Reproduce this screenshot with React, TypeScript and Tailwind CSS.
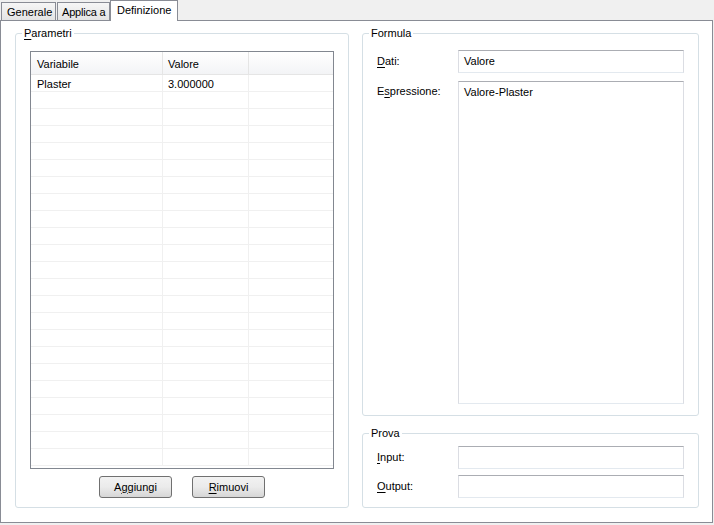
import React from 'react';

const rows = Array.from({ length: 23 }, (_, i) => (i === 0 ? { name: 'Plaster', value: '3.000000' } : null));

const Mnemonic: React.FC<{ before?: string; key_: string; after: string }> = ({ before = '', key_, after }) => (
  <span>
    {before}
    <u className="underline underline-offset-[2px]">{key_}</u>
    {after}
  </span>
);

const TextBox: React.FC<{ value?: string; className?: string }> = ({ value, className = 'h-[23px]' }) => (
  <div
    className={`w-[226px] ${className} border border-t-[#abadb3] border-x-[#dbdde3] border-b-[#e3e9ef] bg-white px-[5px] pt-[4px] leading-[13px]`}
  >
    {value}
  </div>
);

const Button: React.FC<{ children: React.ReactNode }> = ({ children }) => (
  <button className="w-[73px] h-[22px] rounded-[3px] border border-[#707070] bg-gradient-to-b from-[#f2f2f2] via-[#ebebeb] to-[#d6d6d6] text-[11px] leading-[13px] text-black">
    {children}
  </button>
);

export default function App() {
  return (
    <div className="w-[714px] h-[525px] bg-[#f0f0f0] text-[11px] leading-[13px] text-black font-['Liberation_Sans',Arial,sans-serif] overflow-hidden">
      {/* Tabs */}
      <div className="flex items-end h-[20px] pl-[1px]">
        <div className="w-[55px] h-[18px] border border-b-0 border-[#898c95] bg-gradient-to-b from-[#f6f6f6] to-[#e4e4e4] pl-[5px] pt-[3px] whitespace-nowrap">
          Generale
        </div>
        <div className="ml-[1px] w-[53px] h-[18px] border border-b-0 border-[#898c95] bg-gradient-to-b from-[#f6f6f6] to-[#e4e4e4] pl-[4px] pt-[3px] whitespace-nowrap tracking-[-0.2px]">
          Applica a
        </div>
        <div className="relative z-10 -mb-[1px] w-[68px] h-[21px] border border-b-0 border-[#898c95] bg-white pl-[6px] pt-[3px] whitespace-nowrap">
          Definizione
        </div>
      </div>

      {/* Panel */}
      <div className="w-[713px] h-[503px] border border-[#898c95] bg-white flex gap-[13px] pt-[6px] pl-[14px]">
        {/* Parametri */}
        <fieldset className="w-[334px] h-[481px] border border-[#d5dfe5] rounded-[3px] p-0 m-0">
          <legend className="ml-[6px] px-[2px] leading-[13px]">
            <Mnemonic key_="P" after="arametri" />
          </legend>
          <div className="px-[14px] pt-[11px] flex flex-col">
            <div className="h-[418px] border border-[#828790] overflow-hidden">
              <div className="flex h-[23px] border-b border-[#e5e5e5] bg-gradient-to-b from-white to-[#f3f4f6]">
                <div className="w-[132px] border-r border-[#e5e5e5] pl-[6px] pt-[6px]">Variabile</div>
                <div className="w-[86px] border-r border-[#e5e5e5] pl-[5px] pt-[6px]">Valore</div>
                <div className="flex-1" />
              </div>
              {rows.map((r, i) => (
                <div key={i} className="flex h-[17px] border-b border-[#f0f0f0]">
                  <div className="w-[132px] border-r border-[#f0f0f0] pl-[6px] pt-[3px]">{r?.name}</div>
                  <div className="w-[86px] border-r border-[#f0f0f0] pl-[5px] pt-[3px]">{r?.value}</div>
                  <div className="flex-1" />
                </div>
              ))}
            </div>
            <div className="flex justify-center gap-[20px] mt-[7px]">
              <Button>
                <Mnemonic before="A" key_="g" after="giungi" />
              </Button>
              <Button>
                <Mnemonic key_="R" after="imuovi" />
              </Button>
            </div>
          </div>
        </fieldset>

        {/* Right column */}
        <div className="flex flex-col">
          <fieldset className="w-[337px] h-[389px] border border-[#d5dfe5] rounded-[3px] p-0 m-0">
            <legend className="ml-[6px] px-[2px] leading-[13px]">Formula</legend>
            <div className="px-[14px] pt-[10px] flex flex-col gap-[8px]">
              <div className="flex items-center">
                <div className="w-[81px]">
                  <Mnemonic key_="D" after="ati:" />
                </div>
                <TextBox value="Valore" />
              </div>
              <div className="flex items-start">
                <div className="w-[81px] pt-[4px]">
                  <Mnemonic before="E" key_="s" after="pressione:" />
                </div>
                <TextBox value="Valore-Plaster" className="h-[323px]" />
              </div>
            </div>
          </fieldset>

          <fieldset className="mt-[11px] w-[337px] h-[81px] border border-[#d5dfe5] rounded-[3px] p-0 m-0">
            <legend className="ml-[6px] px-[2px] leading-[13px]">Prova</legend>
            <div className="px-[14px] pt-[6px] flex flex-col gap-[6px]">
              <div className="flex items-center">
                <div className="w-[81px]">
                  <Mnemonic key_="I" after="nput:" />
                </div>
                <TextBox />
              </div>
              <div className="flex items-center">
                <div className="w-[81px]">
                  <Mnemonic key_="O" after="utput:" />
                </div>
                <TextBox />
              </div>
            </div>
          </fieldset>
        </div>
      </div>
    </div>
  );
}
